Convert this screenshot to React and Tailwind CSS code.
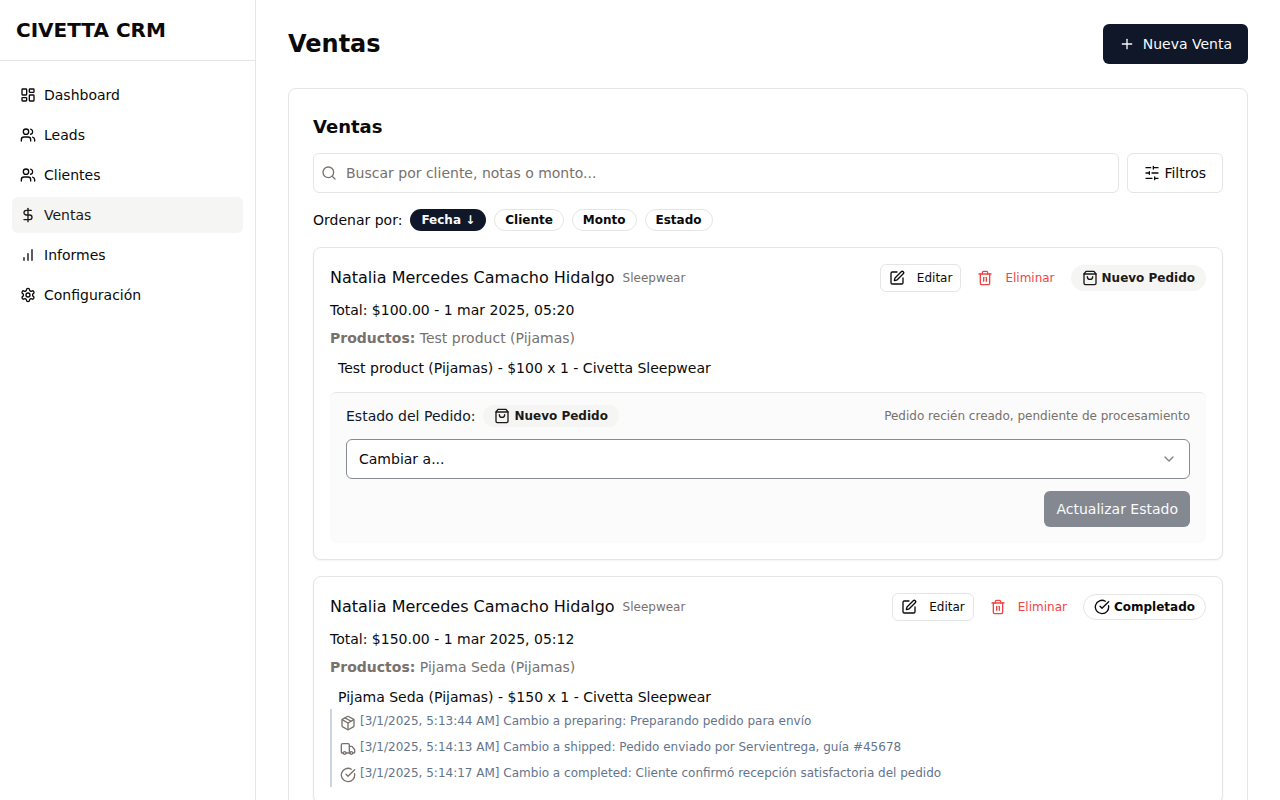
import React from "react";
import {
  LayoutDashboard,
  Users,
  DollarSign,
  Plus,
  Search,
  SquarePen,
  Trash2,
  CircleCheckBig,
  Package,
  Truck,
  ChevronDown,
} from "lucide-react";

function Icon({ className, children }) {
  return (
    <svg
      viewBox="0 0 24 24"
      fill="none"
      stroke="currentColor"
      strokeWidth="2"
      strokeLinecap="round"
      strokeLinejoin="round"
      aria-hidden="true"
      className={className}
    >
      {children}
    </svg>
  );
}

function BarsIcon({ className }) {
  return (
    <Icon className={className}>
      <path d="M12 20V10M18 20V4M6 20v-4" />
    </Icon>
  );
}

function GearIcon({ className }) {
  return (
    <Icon className={className}>
      <path d="M12.22 2h-.44a2 2 0 0 0-2 2v.18a2 2 0 0 1-1 1.73l-.43.25a2 2 0 0 1-2 0l-.15-.08a2 2 0 0 0-2.73.73l-.22.38a2 2 0 0 0 .73 2.73l.15.1a2 2 0 0 1 1 1.72v.51a2 2 0 0 1-1 1.74l-.15.09a2 2 0 0 0-.73 2.73l.22.38a2 2 0 0 0 2.73.73l.15-.08a2 2 0 0 1 2 0l.43.25a2 2 0 0 1 1 1.73V20a2 2 0 0 0 2 2h.44a2 2 0 0 0 2-2v-.18a2 2 0 0 1 1-1.73l.43-.25a2 2 0 0 1 2 0l.15.08a2 2 0 0 0 2.73-.73l.22-.39a2 2 0 0 0-.73-2.73l-.15-.08a2 2 0 0 1-1-1.74v-.5a2 2 0 0 1 1-1.74l.15-.09a2 2 0 0 0 .73-2.73l-.22-.38a2 2 0 0 0-2.73-.73l-.15.08a2 2 0 0 1-2 0l-.43-.25a2 2 0 0 1-1-1.73V4a2 2 0 0 0-2-2z" />
      <circle cx="12" cy="12" r="3" />
    </Icon>
  );
}

function SlidersIcon({ className }) {
  return (
    <Icon className={className}>
      <path d="M21 4h-7M10 4H3M21 12h-9M8 12H3M21 20h-5M12 20H3M14 2v4M8 10v4M16 18v4" />
    </Icon>
  );
}

function BagIcon({ className }) {
  return (
    <Icon className={className}>
      <path d="M6 2 3 6v14a2 2 0 0 0 2 2h14a2 2 0 0 0 2-2V6l-3-4Z" />
      <path d="M3 6h18" />
      <path d="M16 10a4 4 0 0 1-8 0" />
    </Icon>
  );
}

const navItems = [
  { label: "Dashboard", icon: LayoutDashboard },
  { label: "Leads", icon: Users },
  { label: "Clientes", icon: Users },
  { label: "Ventas", icon: DollarSign, active: true },
  { label: "Informes", icon: BarsIcon },
  { label: "Configuración", icon: GearIcon },
];

const sortOptions = [
  { label: "Fecha ↓", active: true },
  { label: "Cliente" },
  { label: "Monto" },
  { label: "Estado" },
];

const sales = [
  {
    id: 1,
    client: "Natalia Mercedes Camacho Hidalgo",
    brand: "Sleepwear",
    total: "Total: $100.00 - 1 mar 2025, 05:20",
    products: "Test product (Pijamas)",
    detail: "Test product (Pijamas) - $100 x 1 - Civetta Sleepwear",
    status: "new",
    history: [],
  },
  {
    id: 2,
    client: "Natalia Mercedes Camacho Hidalgo",
    brand: "Sleepwear",
    total: "Total: $150.00 - 1 mar 2025, 05:12",
    products: "Pijama Seda (Pijamas)",
    detail: "Pijama Seda (Pijamas) - $150 x 1 - Civetta Sleepwear",
    status: "completed",
    history: [
      { icon: Package, text: "[3/1/2025, 5:13:44 AM] Cambio a preparing: Preparando pedido para envío" },
      { icon: Truck, text: "[3/1/2025, 5:14:13 AM] Cambio a shipped: Pedido enviado por Servientrega, guía #45678" },
      { icon: CircleCheckBig, text: "[3/1/2025, 5:14:17 AM] Cambio a completed: Cliente confirmó recepción satisfactoria del pedido" },
    ],
  },
];

function StatusBadge({ status, compact }) {
  const isNew = status === "new";
  const StatusIcon = isNew ? BagIcon : CircleCheckBig;
  return (
    <span
      className={
        "inline-flex items-center gap-1 rounded-full border px-2.5 text-xs font-semibold " +
        (compact ? "py-0.5 " : "py-1 ") +
        (isNew ? "border-transparent bg-[#f5f5f4] text-[#1c1917]" : "border-[#e5e5e5] text-[#0a0a0a]")
      }
    >
      <StatusIcon className="size-4" />
      {isNew ? "Nuevo Pedido" : "Completado"}
    </span>
  );
}

function StatusPanel({ id }) {
  return (
    <div className="mt-3 rounded-md border-t border-[#e5e5e5] bg-[#fbfbfb] px-4 pt-3 pb-4">
      <div className="flex items-center justify-between">
        <div className="flex items-center gap-2">
          <label htmlFor={`status-${id}`} className="text-sm text-[#0f1729]">
            Estado del Pedido:
          </label>
          <StatusBadge status="new" compact />
        </div>
        <p className="text-xs text-[#78716c]">Pedido recién creado, pendiente de procesamiento</p>
      </div>
      <div className="mt-3 grid items-center">
        <select
          id={`status-${id}`}
          className="col-start-1 row-start-1 h-10 w-full appearance-none rounded-md border border-[#878b94] bg-white px-3 text-sm"
        >
          <option>Cambiar a...</option>
          <option>Preparando</option>
          <option>Enviado</option>
          <option>Completado</option>
        </select>
        <ChevronDown className="pointer-events-none col-start-1 row-start-1 mr-[13px] size-4 justify-self-end opacity-50" />
      </div>
      <div className="mt-3 flex justify-end">
        <button disabled className="h-9 rounded-md bg-[#0f1729] px-3 text-sm text-[#f8fafc] opacity-50">
          Actualizar Estado
        </button>
      </div>
    </div>
  );
}

function SaleCard({ sale }) {
  return (
    <article className="rounded-lg border border-[#e5e5e5] bg-white p-4 shadow-xs">
      <div className="flex items-center justify-between">
        <div className="flex items-center gap-2">
          <h3 className="text-base">{sale.client}</h3>
          <span className="text-xs text-[#78716c]">{sale.brand}</span>
        </div>
        <div className="flex items-center gap-2">
          <button className="flex h-7 items-center gap-3 rounded-md border border-[#e5e5e5] px-2 text-xs">
            <SquarePen className="size-4" />
            Editar
          </button>
          <button className="flex h-7 items-center gap-3 rounded-md px-2 text-xs text-[#ef4444]">
            <Trash2 className="size-4" />
            Eliminar
          </button>
          <StatusBadge status={sale.status} />
        </div>
      </div>
      <p className="mt-2 text-sm">{sale.total}</p>
      <p className="mt-2 text-sm text-[#78716c]">
        <strong className="font-bold">Productos:</strong> {sale.products}
      </p>
      <p className="mt-2 pl-2 text-sm leading-6">{sale.detail}</p>
      {sale.history.length > 0 && (
        <ul className="border-l-2 border-[#cbd5e1] pl-2">
          {sale.history.map(({ icon: StepIcon, text }) => (
            <li key={text} className="flex items-start gap-1 py-1 text-xs text-[#64748b]">
              <StepIcon className="mt-0.5 size-4 text-[#78716c]" />
              {text}
            </li>
          ))}
        </ul>
      )}
      {sale.status === "new" && <StatusPanel id={sale.id} />}
    </article>
  );
}

export default function App() {
  return (
    <div className="flex h-screen bg-white font-['DejaVu_Sans',sans-serif] text-[#0a0a0a]">
      <aside className="w-64 shrink-0 border-r border-[#e5e5e5]">
        <div className="border-b border-[#e5e5e5] p-4">
          <p className="text-xl font-bold">CIVETTA CRM</p>
        </div>
        <nav className="flex flex-col gap-1 px-3 py-4">
          {navItems.map(({ label, icon: NavIcon, active }) => (
            <a
              key={label}
              href="#"
              className={"flex h-9 items-center gap-2 rounded-md px-2 text-sm " + (active ? "bg-[#f5f5f4] text-[#1c1917]" : "")}
            >
              <NavIcon className="size-4" />
              {label}
            </a>
          ))}
        </nav>
      </aside>

      <main className="min-w-0 flex-1 overflow-y-auto px-8 py-6">
        <header className="flex items-center justify-between">
          <h1 className="text-2xl font-bold">Ventas</h1>
          <button className="flex h-10 items-center gap-2 rounded-md bg-[#0f1729] px-4 text-sm text-[#f8fafc]">
            <Plus className="size-4" />
            Nueva Venta
          </button>
        </header>

        <section className="mt-6 rounded-lg border border-[#e5e5e5] p-6">
          <h2 className="text-lg font-semibold">Ventas</h2>
          <div className="mt-3 flex gap-2">
            <div className="grid flex-1 items-center">
              <input
                type="search"
                aria-label="Buscar ventas"
                placeholder="Buscar por cliente, notas o monto..."
                className="col-start-1 row-start-1 h-10 w-full rounded-md border border-[#e5e5e5] pr-3 pl-8 text-sm placeholder:text-[#78716c]"
              />
              <Search className="pointer-events-none col-start-1 row-start-1 ml-2 size-4 text-[#78716c]" />
            </div>
            <button className="flex h-10 items-center gap-1 rounded-md border border-[#e5e5e5] px-4 text-sm">
              <SlidersIcon className="size-4" />
              Filtros
            </button>
          </div>
          <div className="mt-4 flex items-center gap-2">
            <span className="text-sm">Ordenar por:</span>
            {sortOptions.map(({ label, active }) => (
              <button
                key={label}
                className={
                  "rounded-full border px-2.5 py-0.5 text-xs font-semibold " +
                  (active ? "border-transparent bg-[#0f1729] text-[#f8fafc]" : "border-[#e5e5e5]")
                }
              >
                {label}
              </button>
            ))}
          </div>
          <div className="mt-4 flex flex-col gap-4">
            {sales.map((sale) => (
              <SaleCard key={sale.id} sale={sale} />
            ))}
          </div>
        </section>
      </main>
    </div>
  );
}
